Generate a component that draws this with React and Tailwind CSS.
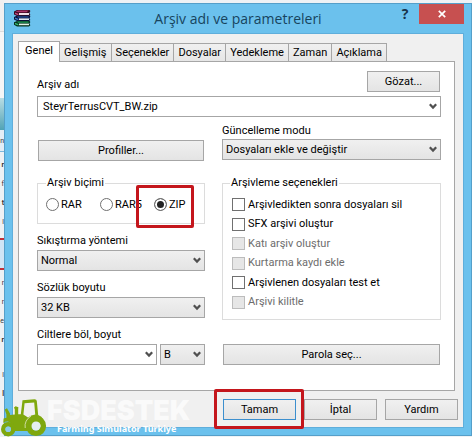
import { useState } from "react";

const tabs = ["Genel", "Gelişmiş", "Seçenekler", "Dosyalar", "Yedekleme", "Zaman", "Açıklama"];

const options = [
  { id: "sil", label: "Arşivledikten sonra dosyaları sil" },
  { id: "sfx", label: "SFX arşivi oluştur" },
  { id: "kati", label: "Katı arşiv oluştur", disabled: true },
  { id: "kurtarma", label: "Kurtarma kaydı ekle", disabled: true },
  { id: "test", label: "Arşivlenen dosyaları test et" },
  { id: "kilitle", label: "Arşivi kilitle", disabled: true },
];

function Chevron() {
  return (
    <svg
      viewBox="0 0 8 7"
      className="pointer-events-none absolute right-1 top-[7px] h-[7px] w-2"
      fill="none"
      stroke="#505050"
      strokeWidth="2.2"
    >
      <path d="M0.8 1.2 L4 4.6 L7.2 1.2" />
    </svg>
  );
}

function Button({ children, className = "", border = "border-[#a6a6a6]" }) {
  return (
    <button
      type="button"
      className={`h-[21px] border bg-linear-to-b from-[#f0f0f0] to-[#e4e4e4] text-center leading-[19px] ${border} ${className}`}
    >
      {children}
    </button>
  );
}

function Select({ id, value, label, className = "" }) {
  return (
    <div className={`relative ${className}`}>
      <select
        id={id}
        aria-label={label}
        defaultValue={value}
        className="block h-[21px] w-full appearance-none border border-[#a6a6a6] bg-linear-to-b from-[#f0f0f0] to-[#e4e4e4] pl-[3px] pr-4"
      >
        <option>{value}</option>
      </select>
      <Chevron />
    </div>
  );
}

function Combo({ id, value, className = "" }) {
  return (
    <div className={`relative ${className}`}>
      <input
        id={id}
        type="text"
        defaultValue={value}
        className="block h-[21px] w-full border border-[#a6a6a6] bg-white pl-[5px] pr-4"
      />
      <Chevron />
    </div>
  );
}

function WinrarIcon() {
  return (
    <svg viewBox="0 0 17 17" className="h-[17px] w-[17px]">
      <path d="M0 1.6 L3 0 H15.6 L16.4 1 L15.4 3 L16.4 5 L15 6 H3 L0 4.4z" fill="#3a0a20" />
      <path d="M1.4 1.6 L4 0.6 H14.6 L12.6 2.2 H4z" fill="#a83268" />
      <path d="M5 3 H15 V5 H5z" fill="#f0dfe6" />
      <path d="M1 2.6 L4.4 3.8 V5.4 L1 4z" fill="#c04a80" />
      <path d="M0 7 L3 5.6 H15.6 L16.4 6.6 L15.4 8.4 L16.4 10 L15 11 H3 L0 9.4z" fill="#0c1238" />
      <path d="M3 6.4 H14.6 V7.6 H4z" fill="#2c5fb4" />
      <path d="M5 8.4 H15 V10 H5z" fill="#dfe8f2" />
      <path d="M1 7.6 L4.4 8.8 V10.2 L1 9z" fill="#3a7ac8" />
      <path d="M0 12.2 L3 11 H15.6 L16.4 12 L15.4 13.6 L16.4 15.2 L15 16.6 H3 L0 14.8z" fill="#06301a" />
      <path d="M3 11.6 H14.6 V12.8 H4z" fill="#1f9a5a" />
      <path d="M5 13.6 H15 V15.2 H5z" fill="#dff2e6" />
      <path d="M1 12.8 L4.4 14 V15.4 L1 14.2z" fill="#37b873" />
    </svg>
  );
}

function Tractor() {
  return (
    <svg viewBox="0 0 47 38" className="h-[38px] w-[47px]">
      <path
        fill="#7fa80e"
        fillRule="evenodd"
        d="M22.5 1.2 L34.6 0.2 Q36.6 0.2 36.8 2 L38.2 16 Q42 17.4 43 20 L27 32 H15 Q13 24.4 8 22.6 Q5 22.4 3.2 24 L3.6 19.6 L6.4 18.8 V15.4 L4.8 10.6 L7 9.2 L10 14.4 V16 L14.8 15.4 V10.4 L14 8.6 L15.6 7.2 L18.4 8.2 L18.2 10 V15.2 H20.8z M24.6 4.2 L23.4 15.6 L28 18.4 Q31 16 35.2 15.6 L34.2 3.4z"
      />
      <circle cx="36" cy="27" r="7.3" fill="none" stroke="#7fa80e" strokeWidth="5.6" />
      <circle cx="36" cy="27" r="4.5" fill="#e4eef0" />
      <circle cx="8.2" cy="30.2" r="5" fill="none" stroke="#7fa80e" strokeWidth="4.4" />
      <circle cx="8.2" cy="30.2" r="2.8" fill="#8fcbe6" />
      <path d="M25.2 29 A11 11 0 0 1 31 17.2" fill="none" stroke="#dfe8c4" strokeWidth="0.8" />
    </svg>
  );
}

// sliver of the window that lies behind the dialog
function Backdrop() {
  return (
    <div
      aria-hidden="true"
      className="flex w-1 shrink-0 flex-col items-end overflow-hidden bg-[#eef1f4] text-[7px] leading-[19px] text-[#333333]"
    >
      <div className="h-8 w-full shrink-0 border-b border-[#dcdcdc] bg-[#f0f0f0]" />
      <div className="h-[66px] w-full shrink-0 bg-[#f6f6f6]" />
      <div className="h-8 w-full shrink-0 bg-linear-to-b from-[#b8dde4] to-[#4fa3b5]" />
      <div className="flex h-[22px] w-full shrink-0 items-end justify-end border-b border-[#7db8dc] bg-[#e3edf6]">
        <span>n</span>
      </div>
      <span className="mt-1 font-bold">r</span>
      <span>f</span>
      <span className="font-bold">t</span>
      <span>l</span>
      <div className="mt-1.5 h-0.5 w-full shrink-0 bg-[#c03038]" />
      <div className="h-7 w-full shrink-0 bg-[#cfe4f5]" />
      <div className="h-0.5 w-full shrink-0 bg-[#c03038]" />
      <span className="mt-1">r</span>
      <span>r</span>
      <span>e</span>
      <span className="font-bold">r</span>
      <span className="mt-4">l</span>
      <span className="font-bold">l</span>
    </div>
  );
}

export default function App() {
  const [tab, setTab] = useState("Genel");
  const [format, setFormat] = useState("ZIP");

  return (
    <div className="relative flex overflow-hidden bg-[#eef2f5] pb-px font-['Roboto','DejaVu_Sans',sans-serif] text-[11px] leading-[14px] text-black">
      <Backdrop />

      <div className="mt-[3px] min-w-0 flex-1 border border-[#559fc9] bg-[#6bc1ed] px-[7px] pb-[7px]">
        {/* title bar */}
        <header className="relative flex h-[29px] items-center justify-center">
          <div className="absolute left-0.5 top-1.5">
            <WinrarIcon />
          </div>
          <h1 className="font-['Open_Sans',sans-serif] text-[14px] leading-5 text-[#17445e]">
            Arşiv adı ve parametreleri
          </h1>
          <div className="absolute right-0 top-0 flex">
            <button
              type="button"
              aria-label="Yardım"
              className="h-5 w-7 font-['Open_Sans',sans-serif] text-[14px] font-bold text-[#17324a]"
            >
              ?
            </button>
            <button
              type="button"
              aria-label="Kapat"
              className="flex h-5 w-[45px] items-center justify-center bg-[#c75050]"
            >
              <svg viewBox="0 0 8 8" className="h-2 w-2" stroke="#ffffff" strokeWidth="1.7">
                <path d="M0.8 0.8 L7.2 7.2 M7.2 0.8 L0.8 7.2" />
              </svg>
            </button>
          </div>
        </header>

        <div className="border border-[#5faedb] bg-[#f0f0f0] px-[5px] pb-[7px] pt-[7px]">
          {/* tabs */}
          <div role="tablist" className="flex items-end pr-[71px]">
            {tabs.map((name) => (
              <button
                key={name}
                type="button"
                role="tab"
                aria-selected={tab === name}
                onClick={() => setTab(name)}
                className={
                  tab === name
                    ? "relative z-10 -mb-px h-[21px] flex-auto border border-b-0 border-[#a6a6a6] bg-white px-1 pb-0.5"
                    : "h-[18px] flex-auto border border-b-0 border-l-0 border-[#a6a6a6] bg-linear-to-b from-[#f0f0f0] to-[#e6e6e6] px-0.5"
                }
              >
                {name}
              </button>
            ))}
          </div>

          {/* tab panel */}
          <div className="mr-[3px] border border-[#a6a6a6] bg-white pb-[25px] pl-[18px] pr-[13px] pt-[9px]">
            <div className="mb-1 flex items-center justify-between pr-px">
              <label htmlFor="archive" className="pt-1.5">Arşiv adı</label>
              <Button className="w-[73px]">Gözat...</Button>
            </div>
            <Combo id="archive" value="SteyrTerrusCVT_BW.zip" />

            <div className="grid grid-cols-[168fr_219fr] gap-x-[17px] pt-[7px]">
              <div className="flex min-w-0 flex-col pt-4">
                <Button className="mx-px">Profiller...</Button>

                <fieldset className="mt-[15px] h-12 min-w-0 border border-[#dcdcdc] pl-2 pt-2">
                  <legend className="px-px">Arşiv biçimi</legend>
                  <div className="flex">
                    {["RAR", "RAR5", "ZIP"].map((name) => (
                      <div key={name} className="relative w-[54px] shrink-0">
                        <label className="flex h-[13px] items-center gap-0.5">
                          <input
                            type="radio"
                            name="format"
                            value={name}
                            checked={format === name}
                            onChange={() => setFormat(name)}
                            className="h-[13px] w-[13px] shrink-0 appearance-none rounded-full border border-[#707070] bg-white checked:bg-[#222222] checked:shadow-[inset_0_0_0_2px_#ffffff]"
                          />
                          {name}
                        </label>
                        {name === "ZIP" && (
                          <div className="pointer-events-none absolute -left-[18px] -top-[13px] h-[43px] w-[58px] rounded-xs border-3 border-[#c4161c]" />
                        )}
                      </div>
                    ))}
                  </div>
                </fieldset>

                <label htmlFor="method" className="mb-0.5 mt-2.5">Sıkıştırma yöntemi</label>
                <Select id="method" value="Normal" />

                <label htmlFor="dict" className="mb-0.5 mt-2.5">Sözlük boyutu</label>
                <Select id="dict" value="32 KB" />

                <label htmlFor="volume" className="mb-0.5 mt-2.5">Ciltlere böl, boyut</label>
                <div className="flex gap-[3px]">
                  <Combo id="volume" value="" className="min-w-0 flex-1" />
                  <Select id="unit" label="Birim" value="B" className="w-[45px]" />
                </div>
              </div>

              <div className="flex min-w-0 flex-col">
                <label htmlFor="update" className="mb-px">Güncelleme modu</label>
                <Select id="update" value="Dosyaları ekle ve değiştir" />

                <fieldset className="mt-4 min-w-0 border border-[#dcdcdc] pb-[7px] pl-[9px] pt-[5px]">
                  <legend className="-ml-0.5 px-px">Arşivleme seçenekleri</legend>
                  <div className="grid h-[117px] grid-rows-6 items-center">
                    {options.map((o) => (
                      <label
                        key={o.id}
                        className={`flex items-center gap-[3px] ${o.disabled ? "text-[#6d6d6d]" : ""}`}
                      >
                        <input
                          type="checkbox"
                          disabled={o.disabled}
                          className="h-[13px] w-[13px] shrink-0 appearance-none border border-[#707070] bg-white checked:bg-[#222222] disabled:border-[#bcbcbc] disabled:bg-[#e6e6e6]"
                        />
                        {o.label}
                      </label>
                    ))}
                  </div>
                </fieldset>

                <Button className="mx-px mt-6">Parola seç...</Button>
              </div>
            </div>
          </div>

          {/* dialog buttons */}
          <div className="mt-2 flex justify-end gap-2">
            <div className="relative">
              <Button className="w-[73px]" border="border-[#3c8fce]">Tamam</Button>
              <div className="pointer-events-none absolute -left-[9px] -top-[10px] h-10 w-[90px] rounded-xs border-3 border-[#c4161c]" />
            </div>
            <Button className="w-[73px]">İptal</Button>
            <Button className="w-[73px]">Yardım</Button>
          </div>
        </div>
      </div>

      {/* site watermark */}
      <div className="pointer-events-none absolute bottom-0 left-0 flex items-end">
        <Tractor />
        <div className="flex flex-col items-center pb-0.5 text-white">
          <span className="font-['Inter',sans-serif] text-[27px] font-black leading-6 opacity-70">FSDESTEK</span>
          <span className="pr-1 font-['Noto_Sans',sans-serif] text-[9px] font-bold leading-3">
            Farming Simulator Türkiye
          </span>
        </div>
      </div>
    </div>
  );
}
